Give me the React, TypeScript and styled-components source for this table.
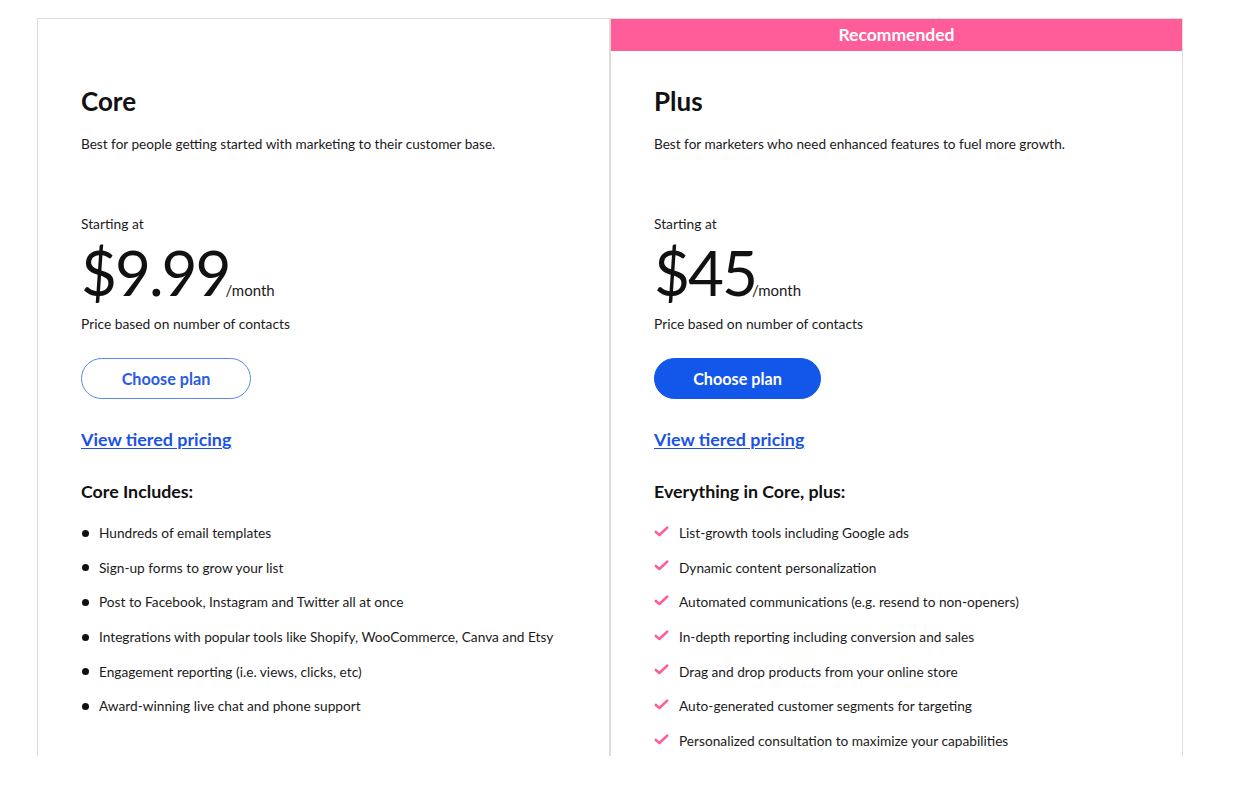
import React from 'react'
import styled, { createGlobalStyle } from 'styled-components'

const GlobalStyle = createGlobalStyle`
  body {
    margin: 0;
    background: #ffffff;
    font-family: Lato, "Open Sans", Arial, sans-serif;
    color: #1b1b1b;
  }
`

const Page = styled.div`
  display: flex;
  padding: 18px 0 0 37px;
`

const Card = styled.div`
  width: 573px;
  height: 738px;
  box-sizing: border-box;
  border: 1px solid #dedcd7;
  border-bottom: none;
  display: flex;
  flex-direction: column;
`

const Band = styled.div<{ $show: boolean }>`
  height: 32px;
  background: ${(p) => (p.$show ? '#ff5c9a' : 'transparent')};
  color: #ffffff;
  font-size: 17.5px;
  font-weight: 700;
  line-height: 32px;
  text-align: center;
`

const Body = styled.div`
  padding: 0 43px;
  display: flex;
  flex-direction: column;
  align-items: flex-start;
`

const Title = styled.h2`
  margin: 36px 0 0;
  font-size: 26px;
  line-height: 29px;
  font-weight: 700;
  color: #111;
`

const Desc = styled.p`
  margin: 18px 0 0;
  font-size: 13.6px;
  line-height: 20px;
`

const Starting = styled.div`
  margin-top: 60px;
  font-size: 13.8px;
  line-height: 20px;
`

const PriceRow = styled.div`
  margin-top: 7px;
  display: flex;
  align-items: baseline;
  height: 62px;
`

const Amount = styled.span`
  font-size: 62px;
  line-height: 62px;
  font-weight: 400;
  letter-spacing: -2px;
  color: #111;
`

const Per = styled.span`
  font-size: 15px;
  margin-left: -4px;
`

const Note = styled.div`
  margin-top: 11px;
  font-size: 13.8px;
  line-height: 20px;
`

const PlanButton = styled.button<{ $primary: boolean }>`
  margin-top: 24px;
  height: 41px;
  width: ${(p) => (p.$primary ? '167px' : '170px')};
  padding: 0 0 1px;
  border-radius: 21px;
  border: 1px solid ${(p) => (p.$primary ? '#1357ea' : '#5b86ef')};
  background: ${(p) => (p.$primary ? '#1357ea' : '#ffffff')};
  color: ${(p) => (p.$primary ? '#ffffff' : '#2a5be3')};
  font-family: inherit;
  font-size: 16.2px;
  font-weight: 700;
  cursor: pointer;
`

const TierLink = styled.a`
  margin-top: 29px;
  font-size: 17.9px;
  line-height: 22px;
  font-weight: 700;
  color: #1a52e3;
  text-decoration: underline;
  text-underline-offset: 2px;
`

const IncludesHeading = styled.h3`
  margin: 30px 0 0;
  font-size: 17.8px;
  line-height: 22px;
  font-weight: 700;
  color: #111;
`

const Features = styled.ul`
  list-style: none;
  margin: 21px 0 0;
  padding: 0;
  display: flex;
  flex-direction: column;
  gap: 14.7px;
`

const Feature = styled.li`
  display: flex;
  align-items: center;
  font-size: 13.7px;
  line-height: 20px;
`

const Dot = styled.span`
  width: 7px;
  height: 7px;
  border-radius: 50%;
  background: #111;
  margin: 0 10px 0 1px;
  flex-shrink: 0;
`

const CheckWrap = styled.span`
  display: inline-flex;
  width: 25px;
  margin-top: -4px;
  flex-shrink: 0;
`

const Check = () => (
  <CheckWrap>
    <svg width="15" height="11" viewBox="0 0 15 11" fill="none">
      <path d="M1.8 6 L5.4 9 L13.2 1.6" stroke="#ff5c9a" strokeWidth="2.6" strokeLinecap="round" strokeLinejoin="round" />
    </svg>
  </CheckWrap>
)

type Plan = {
  name: string
  desc: string
  price: string
  recommended: boolean
  heading: string
  features: string[]
}

const plans: Plan[] = [
  {
    name: 'Core',
    desc: 'Best for people getting started with marketing to their customer base.',
    price: '$9.99',
    recommended: false,
    heading: 'Core Includes:',
    features: [
      'Hundreds of email templates',
      'Sign-up forms to grow your list',
      'Post to Facebook, Instagram and Twitter all at once',
      'Integrations with popular tools like Shopify, WooCommerce, Canva and Etsy',
      'Engagement reporting (i.e. views, clicks, etc)',
      'Award-winning live chat and phone support',
    ],
  },
  {
    name: 'Plus',
    desc: 'Best for marketers who need enhanced features to fuel more growth.',
    price: '$45',
    recommended: true,
    heading: 'Everything in Core, plus:',
    features: [
      'List-growth tools including Google ads',
      'Dynamic content personalization',
      'Automated communications (e.g. resend to non-openers)',
      'In-depth reporting including conversion and sales',
      'Drag and drop products from your online store',
      'Auto-generated customer segments for targeting',
      'Personalized consultation to maximize your capabilities',
    ],
  },
]

const PlanCard = ({ plan }: { plan: Plan }) => (
  <Card>
    <Band $show={plan.recommended}>{plan.recommended ? 'Recommended' : ''}</Band>
    <Body>
      <Title>{plan.name}</Title>
      <Desc>{plan.desc}</Desc>
      <Starting>Starting at</Starting>
      <PriceRow>
        <Amount>{plan.price}</Amount>
        <Per>/month</Per>
      </PriceRow>
      <Note>Price based on number of contacts</Note>
      <PlanButton $primary={plan.recommended}>Choose plan</PlanButton>
      <TierLink href="#">View tiered pricing</TierLink>
      <IncludesHeading>{plan.heading}</IncludesHeading>
      <Features>
        {plan.features.map((f) => (
          <Feature key={f}>
            {plan.recommended ? <Check /> : <Dot />}
            {f}
          </Feature>
        ))}
      </Features>
    </Body>
  </Card>
)

const App = () => (
  <>
    <GlobalStyle />
    <Page>
      {plans.map((p) => (
        <PlanCard key={p.name} plan={p} />
      ))}
    </Page>
  </>
)

export default App
